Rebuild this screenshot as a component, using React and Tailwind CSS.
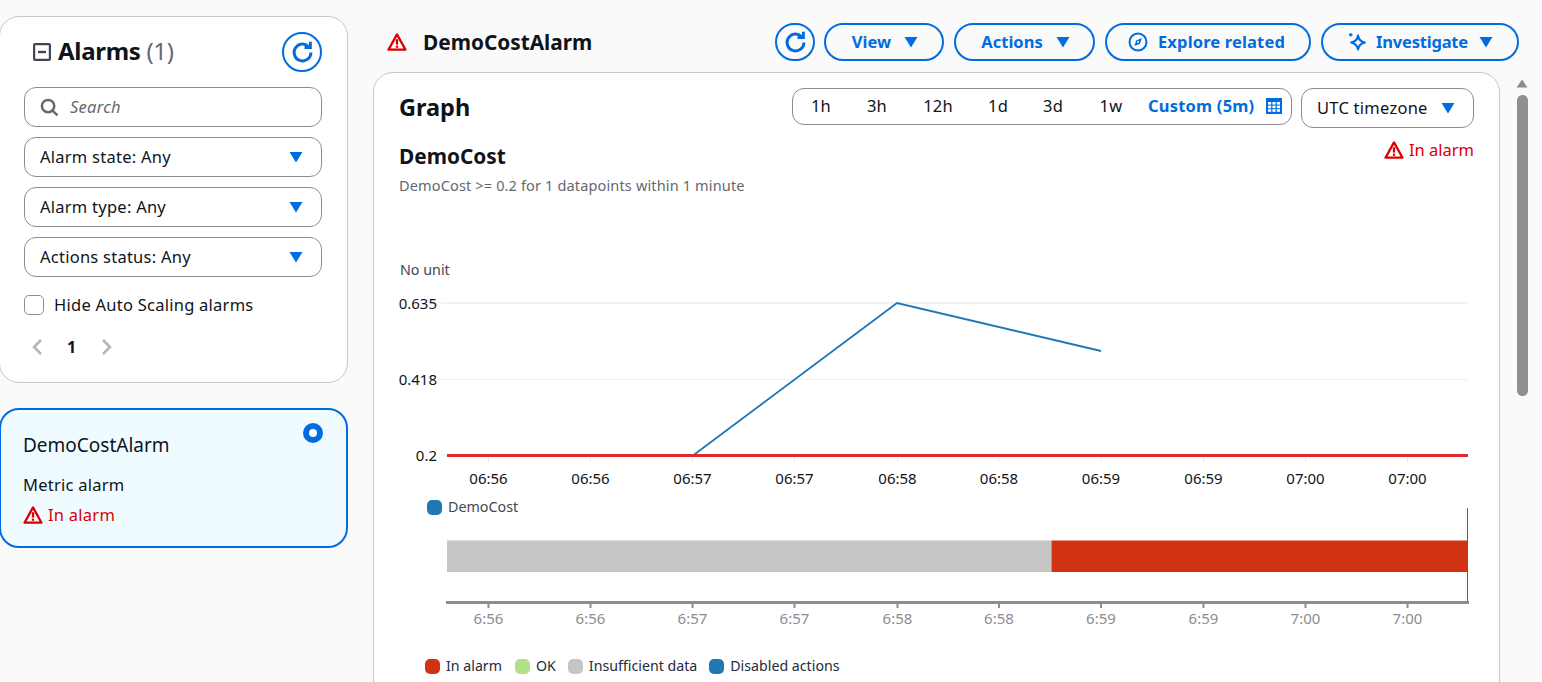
import React from "react";

const Warn = ({ className = "w-5 h-5" }) => (
  <svg viewBox="0 0 20 20" className={className} fill="none">
    <path d="M10 2.4 1.5 17.7h17L10 2.4Z" stroke="#db0000" strokeWidth="2.3" strokeLinejoin="round" />
    <path d="M10 7.2v5.4" stroke="#db0000" strokeWidth="2.3" />
    <path d="M10 13.6v2.2" stroke="#db0000" strokeWidth="2.3" />
  </svg>
);

const Caret = ({ className = "" }) => (
  <svg viewBox="0 0 14 12" className={`w-[14px] h-[12px] ${className}`}>
    <path d="M0.5 1h13L7 11.5Z" fill="#006ce0" />
  </svg>
);

const Refresh = ({ className = "w-10 h-10" }) => (
  <button className={`${className} shrink-0 rounded-full border-2 border-[#006ce0] flex items-center justify-center bg-transparent`}>
    <svg viewBox="0 0 24 24" className="w-[27px] h-[27px]" fill="none" stroke="#006ce0" strokeWidth="2.6">
      <path d="M19.5 12a7.5 7.5 0 1 1-2.4-5.5" />
      <path d="M19 2.4V7.6h-5.2" strokeLinejoin="miter" />
    </svg>
  </button>
);

const Btn = ({ w, children }) => (
  <button className={`h-[38px] ${w} shrink-0 rounded-full border-2 border-[#006ce0] flex items-center justify-center gap-2 text-[#006ce0] font-bold text-[16.5px]`}>
    {children}
  </button>
);

const Select = ({ label }) => (
  <div className="h-10 rounded-xl border border-[#8c8c94] bg-white flex items-center justify-between pl-[15px] pr-[18px] text-[16.5px] tracking-[0.25px] text-[#0f141a]">
    <span>{label}</span>
    <Caret />
  </div>
);

const Swatch = ({ color }) => <span className="w-[15px] h-[15px] rounded-[5px] shrink-0" style={{ backgroundColor: color }} />;

const ticks = [488.5, 590.5, 692.5, 794.5, 897.5, 999, 1101, 1203.5, 1305.5, 1407.5];
const topLabels = ["06:56", "06:56", "06:57", "06:57", "06:58", "06:58", "06:59", "06:59", "07:00", "07:00"];
const botLabels = ["6:56", "6:56", "6:57", "6:57", "6:58", "6:58", "6:59", "6:59", "7:00", "7:00"];

export default function App() {
  return (
    <div className="w-[1542px] h-[682px] overflow-hidden bg-[#fafafa] flex font-['Noto_Sans',sans-serif] text-[#0f141a]">
      {/* Left column */}
      <aside className="w-[349px] -ml-px shrink-0 pt-4 flex flex-col gap-[25px]">
        <section className="h-[367px] rounded-[20px] border border-[#c6c6cd] bg-white pl-[24px] pr-[25px]">
          <div className="h-[70px] pt-[15px] pl-[9px] flex items-start justify-between">
            <div className="flex items-center gap-[7px] h-10">
              <svg viewBox="0 0 18 18" className="w-[18px] h-[18px]" fill="none">
                <rect x="1.1" y="1.1" width="15.8" height="15.8" rx="1" stroke="#424650" strokeWidth="2.2" />
                <path d="M5 9h8" stroke="#424650" strokeWidth="2.4" />
              </svg>
              <h2 className="text-[24px] font-bold leading-none tracking-[-0.3px] -mt-[2px]">
                Alarms <span className="font-normal text-[#656871]">(1)</span>
              </h2>
            </div>
            <Refresh />
          </div>
          <div className="flex flex-col gap-[10px]">
            <div className="h-10 rounded-xl border border-[#8c8c94] bg-white flex items-center pl-[15px] gap-[11px]">
              <svg viewBox="0 0 20 20" className="w-[19px] h-[19px]" fill="none" stroke="#656871" strokeWidth="2.6">
                <circle cx="8.5" cy="8.5" r="6.5" />
                <path d="M13.2 13.2 18.4 18.4" />
              </svg>
              <span className="italic text-[16.5px] tracking-[0.25px] text-[#656871]">Search</span>
            </div>
            <Select label="Alarm state: Any" />
            <Select label="Alarm type: Any" />
            <Select label="Actions status: Any" />
          </div>
          <label className="mt-[18px] flex items-center gap-[10px] text-[16.5px] tracking-[0.25px] leading-5">
            <span className="w-5 h-5 rounded-[5px] border border-[#8c8c94] bg-white" />
            Hide Auto Scaling alarms
          </label>
          <div className="mt-[22px] pl-[7px] flex items-center gap-[24px] h-5">
            <svg viewBox="0 0 12 16" className="w-3 h-4" fill="none" stroke="#b4b4bb" strokeWidth="2.6"><path d="M10 1 3 8l7 7" /></svg>
            <span className="font-bold text-[16px] text-[#0f141a] w-[9px]">1</span>
            <svg viewBox="0 0 12 16" className="w-3 h-4 ml-[1px]" fill="none" stroke="#b4b4bb" strokeWidth="2.6"><path d="m2 1 7 7-7 7" /></svg>
          </div>
        </section>
        <section className="h-[140px] rounded-[20px] border-2 border-[#006ce0] bg-[#f0fbff] pl-[22px] pr-6 relative">
          <div className="pt-[23px] text-[19px] leading-6">DemoCostAlarm</div>
          <div className="mt-[18px] text-[16.5px] tracking-[0.25px] leading-5">Metric alarm</div>
          <div className="mt-[10px] flex items-center gap-[5px] text-[16.5px] tracking-[0.25px] leading-5 text-[#db0000]">
            <Warn />
            In alarm
          </div>
          <span className="absolute right-[23px] top-[13px] w-5 h-5 rounded-full border-[6px] border-[#006ce0] bg-white" />
        </section>
      </aside>

      {/* Main column */}
      <main className="w-[1127px] ml-[25px] shrink-0 flex flex-col">
        <header className="h-[56px] mt-0 flex items-start pt-[23px] shrink-0 relative">
          <div className="h-[38px] flex items-center pl-[14px]">
            <Warn className="w-[20px] h-[20px]" />
            <h1 className="ml-[16px] text-[20.8px] font-bold leading-none">DemoCostAlarm</h1>
          </div>
          <div className="absolute left-[402px] top-[23px] flex items-center gap-[10px]">
            <Refresh className="w-10 h-[38px] -mr-[1px]" />
            <Btn w="w-[120px] pl-[2px]">View <Caret className="ml-[5px]" /></Btn>
            <Btn w="w-[141px] pl-[2px]">Actions <Caret className="ml-[5px]" /></Btn>
            <Btn w="w-[206px] pr-[3px]">
              <svg viewBox="0 0 20 20" className="w-5 h-5 mr-[2px]" fill="none" stroke="#006ce0" strokeWidth="2">
                <circle cx="10" cy="10" r="8.5" />
                <path d="M13.8 6 12 11.8 6.4 14 8.2 8.4Z" fill="#006ce0" stroke="none" />
                <circle cx="10" cy="10" r="1" fill="#fff" stroke="none" />
              </svg>
              <span className="tracking-[0.15px]">Explore related</span>
            </Btn>
            <Btn w="w-[198px]">
              <svg viewBox="0 0 20 20" className="w-[21px] h-[21px]" fill="none" stroke="#006ce0" strokeWidth="2.1">
                <path d="M10.5 3.5c.8 4 2.6 5.8 6.5 6.5-3.9.8-5.7 2.6-6.5 6.5-.8-3.9-2.6-5.7-6.5-6.5 3.9-.7 5.7-2.5 6.5-6.5Z" strokeLinejoin="round" />
                <path d="M3.5 1v3.4M1.8 2.7h3.4" strokeWidth="1.4" />
              </svg>
              <span className="tracking-[-0.2px]">Investigate</span> <Caret className="ml-[3px]" />
            </Btn>
          </div>
        </header>

        <section className="mt-4 flex-1 min-h-[700px] rounded-t-[20px] border border-[#c6c6cd] bg-white">
          <div className="pl-[25px] pr-[25px] pt-[15px] flex items-start">
            <h2 className="text-[23.5px] font-bold leading-[38px]">Graph</h2>
            <div className="ml-auto h-[37px] w-[500px] rounded-xl border border-[#8c8c94] flex items-center text-[16.5px] tracking-[0.2px] relative pb-[1px]">
              <span className="w-[56px] text-center">1h</span>
              <span className="w-[56px] text-center">3h</span>
              <span className="w-[66px] text-center">12h</span>
              <span className="w-[54px] text-center">1d</span>
              <span className="w-[56px] text-center">3d</span>
              <span className="w-[60px] text-center">1w</span>
              <span className="ml-[7px] font-bold text-[#006ce0] whitespace-nowrap">Custom (5m)</span>
              <svg viewBox="0 0 16 16" className="w-4 h-4 absolute right-[9px] top-[9px]">
                <rect width="16" height="16" fill="#006ce0" />
                <g fill="#ffffff">
                  <rect x="2" y="4" width="3.2" height="2.6" /><rect x="6.4" y="4" width="3.2" height="2.6" /><rect x="10.8" y="4" width="3.2" height="2.6" />
                  <rect x="2" y="7.6" width="3.2" height="2.6" /><rect x="6.4" y="7.6" width="3.2" height="2.6" /><rect x="10.8" y="7.6" width="3.2" height="2.6" />
                  <rect x="2" y="11.2" width="3.2" height="2.6" /><rect x="6.4" y="11.2" width="3.2" height="2.6" /><rect x="10.8" y="11.2" width="3.2" height="2.6" />
                </g>
              </svg>
            </div>
            <div className="ml-[9px] h-10 w-[173px] rounded-xl border border-[#8c8c94] flex items-center justify-between pl-[15px] pr-[18px] text-[16.5px] tracking-[0.25px]">
              <span>UTC timezone</span>
              <Caret />
            </div>
          </div>
          <div className="pl-[25px] pr-[25px] flex items-start justify-between mt-[2px]">
            <div>
              <h3 className="mt-[13px] text-[20.8px] font-bold leading-[26px]">DemoCost</h3>
              <p className="mt-[6px] text-[14.5px] tracking-[0.15px] leading-5 text-[#656871]">DemoCost &gt;= 0.2 for 1 datapoints within 1 minute</p>
            </div>
            <div className="mt-[10px] flex items-center gap-[5px] text-[16.5px] leading-5 text-[#db0000]">
              <Warn />
              In alarm
            </div>
          </div>

          {/* Line chart */}
          <svg viewBox="374 255 1125 240" className="w-[1125px] h-[240px] block mt-[60px] font-['Noto_Sans',sans-serif]">
            <text x="400" y="275" fontSize="14.3" fill="#414750">No unit</text>
            <path d="M441 303H1468" stroke="#eeeeef" strokeWidth="1.6" />
            <path d="M441 379.5H1468" stroke="#eeeeef" strokeWidth="1" />
            <path d="M441 455h6" stroke="#e9ebed" strokeWidth="1" />
            {ticks.map((x) => <path key={x} d={`M${x} 456v6`} stroke="#e9ebed" strokeWidth="1" />)}
            <text x="437" y="308.5" fontSize="15" textAnchor="end" fill="#0f141a">0.635</text>
            <text x="437" y="384.5" fontSize="15" textAnchor="end" fill="#0f141a">0.418</text>
            <text x="437" y="460.5" fontSize="15" textAnchor="end" fill="#0f141a">0.2</text>
            <polyline points="693,455.5 897,303 1101,351" fill="none" stroke="#1f77b4" strokeWidth="1.8" />
            <path d="M447 455.5H1468" stroke="#dd2b30" strokeWidth="3" />
            {ticks.map((x, i) => <text key={x} x={x} y="484" fontSize="15" textAnchor="middle" fill="#0f141a">{topLabels[i]}</text>)}
          </svg>

          <div className="pl-[53px] h-[20px] mt-[2px] flex items-center gap-[6px] text-[14.3px] text-[#414750]">
            <Swatch color="#1f77b4" />
            DemoCost
          </div>

          {/* Status chart */}
          <svg viewBox="374 505 1125 130" className="w-[1125px] h-[130px] block -mt-3 font-['Noto_Sans',sans-serif]">
            <rect x="447" y="540.5" width="604.5" height="31.5" fill="#c6c6c6" />
            <rect x="1051.5" y="540.5" width="416" height="31.5" fill="#d13212" />
            <path d="M1467.5 508v94" stroke="#5f5f66" strokeWidth="1" />
            <path d="M446 602.5H1469" stroke="#8c8c94" strokeWidth="3" />
            {ticks.map((x) => <path key={x} d={`M${x} 603v5`} stroke="#8c8c94" strokeWidth="2" />)}
            {ticks.map((x, i) => <text key={x} x={x} y="624" fontSize="15" textAnchor="middle" fill="#8c8c94">{botLabels[i]}</text>)}
          </svg>

          <div className="pl-[51px] mt-[21px] flex items-center text-[14.2px] text-[#232b37] leading-5">
            <Swatch color="#d13212" /><span className="ml-[6px]">In alarm</span>
            <span className="ml-[13px] flex"><Swatch color="#b2df8a" /></span><span className="ml-[6px]">OK</span>
            <span className="ml-[12px] flex"><Swatch color="#c6c6c6" /></span><span className="ml-[6px]">Insufficient data</span>
            <span className="ml-[12px] flex"><Swatch color="#1f77b4" /></span><span className="ml-[6px]">Disabled actions</span>
          </div>
        </section>
      </main>

      {/* Scrollbar */}
      <div className="ml-[16px] w-[12px] shrink-0 flex flex-col items-center pt-[79px]">
        <svg viewBox="0 0 12 9" className="w-3 h-[9px]"><path d="M6 0.5 11.5 8.5H0.5Z" fill="#8c8c8c" /></svg>
        <div className="mt-[7px] w-[11px] h-[301px] rounded-full bg-[#8f8f8f]" />
      </div>
    </div>
  );
}
